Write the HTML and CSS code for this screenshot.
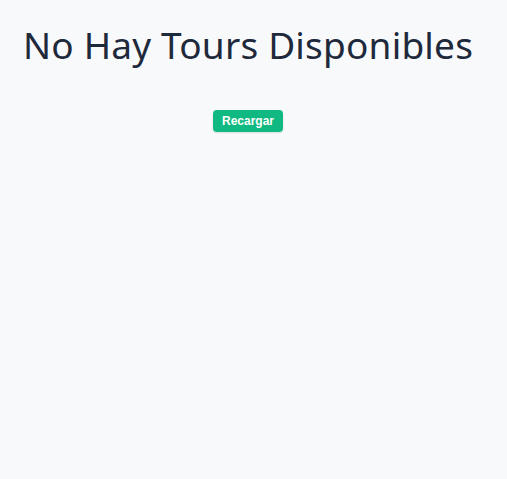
FILE: index.html
```html
<!DOCTYPE html>
<html lang="es">
<head>
<meta charset="utf-8">
<link rel="stylesheet" href="styles.css">
</head>
<body>
<main class="empty">
  <h1 class="empty-title">No Hay Tours Disponibles</h1>
  <button class="reload-btn" type="button">Recargar</button>
</main>
</body>
</html>
```
FILE: styles.css
```css
html, body {
  margin: 0;
  padding: 0;
  background: #f8f9fb;
  height: 100%;
}
.empty {
  display: flex;
  flex-direction: column;
  align-items: center;
  padding: 21px 11px 0 0;
}
.empty-title {
  margin: 0;
  font-family: "Noto Sans", sans-serif;
  font-weight: 400;
  font-size: 37px;
  letter-spacing: 0.2px;
  line-height: 48px;
  color: #1e293b;
}
.reload-btn {
  margin-top: 41px;
  width: 70px;
  height: 22px;
  padding: 0;
  border: none;
  border-radius: 4px;
  background: #10b981;
  color: #ffffff;
  font-family: "Liberation Sans", Arial, sans-serif;
  font-weight: 700;
  font-size: 12px;
  box-shadow: 0 1px 2px rgba(0,0,0,0.12);
}
```
